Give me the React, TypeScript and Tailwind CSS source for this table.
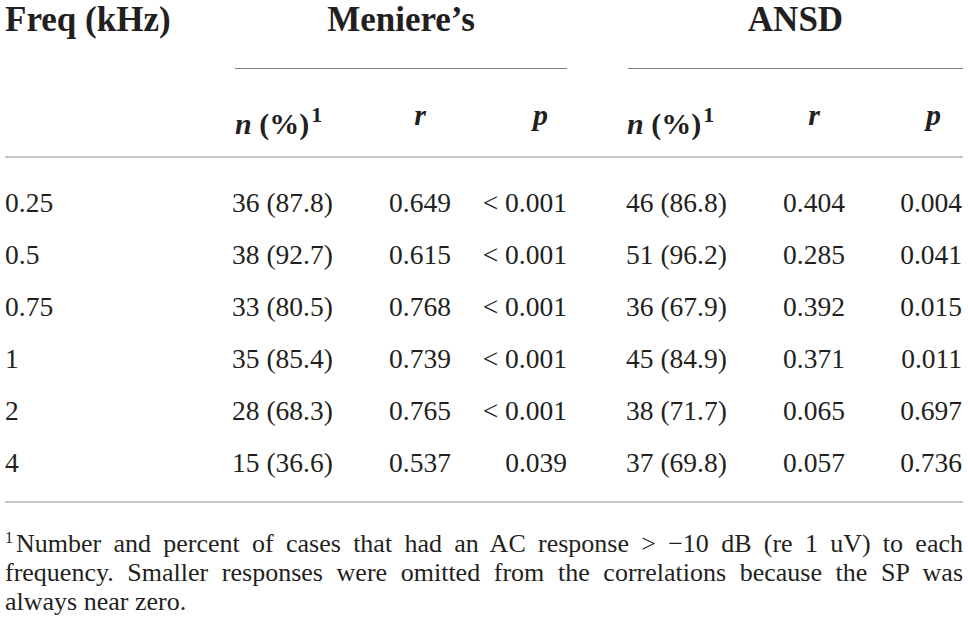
import React from "react";

const rows = [
  ["0.25", "36 (87.8)", "0.649", "< 0.001", "46 (86.8)", "0.404", "0.004"],
  ["0.5", "38 (92.7)", "0.615", "< 0.001", "51 (96.2)", "0.285", "0.041"],
  ["0.75", "33 (80.5)", "0.768", "< 0.001", "36 (67.9)", "0.392", "0.015"],
  ["1", "35 (85.4)", "0.739", "< 0.001", "45 (84.9)", "0.371", "0.011"],
  ["2", "28 (68.3)", "0.765", "< 0.001", "38 (71.7)", "0.065", "0.697"],
  ["4", "15 (36.6)", "0.537", "0.039", "37 (69.8)", "0.057", "0.736"],
];

function NPct() {
  return (
    <span className="whitespace-nowrap">
      <span className="italic">n</span> (%)
      <span className="text-[22px] align-[12px] ml-[2px]">1</span>
    </span>
  );
}

export default function App() {
  return (
    <div
      className="w-[968px] h-[633px] bg-white px-[5px] text-[#231f20] overflow-hidden"
      style={{ fontFamily: '"Liberation Serif", "Times New Roman", serif' }}
    >
      <div className="grid grid-cols-[227px_140px_96px_99px_59px_138px_100px_99px]">
        {/* header row 1 */}
        <div className="h-[69px] text-[35px] leading-[40px] font-bold whitespace-nowrap">
          Freq (kHz)
        </div>
        <div className="col-span-3 h-[69px] ml-[3px] border-b border-[#7d7d7d] text-center text-[35px] leading-[40px] font-bold">
          Meniere’s
        </div>
        <div className="h-[69px]" />
        <div className="col-span-3 h-[69px] ml-[2px] border-b border-[#7d7d7d] text-center text-[35px] leading-[40px] font-bold">
          ANSD
        </div>

        {/* header row 2 */}
        <div className="h-[87px]" />
        <div className="h-[87px] pt-[28px] pl-[3px] text-[30px] leading-[36px] font-bold">
          <NPct />
        </div>
        <div className="h-[87px] pt-[28px] text-center text-[30px] leading-[36px] font-bold italic">
          r
        </div>
        <div className="h-[87px] pt-[28px] pr-[19px] text-right text-[30px] leading-[36px] font-bold italic">
          p
        </div>
        <div className="h-[87px]" />
        <div className="h-[87px] pt-[28px] pl-[1px] text-[30px] leading-[36px] font-bold">
          <NPct />
        </div>
        <div className="h-[87px] pt-[28px] text-center text-[30px] leading-[36px] font-bold italic">
          r
        </div>
        <div className="h-[87px] pt-[28px] pr-[22px] text-right text-[30px] leading-[36px] font-bold italic">
          p
        </div>

        <div className="col-span-8 h-[2px] bg-[#c6c6c6]" />
        <div className="col-span-8 h-[19px]" />

        {rows.map((r, i) => (
          <React.Fragment key={i}>
            <div className="h-[52px] text-[27.5px] leading-[52px]">{r[0]}</div>
            <div className="h-[52px] text-[27.5px] leading-[52px] whitespace-nowrap">{r[1]}</div>
            <div className="h-[52px] text-[27.5px] leading-[52px] text-center">{r[2]}</div>
            <div className="h-[52px] text-[27.5px] leading-[52px] text-right whitespace-nowrap">{r[3]}</div>
            <div className="h-[52px]" />
            <div className="h-[52px] text-[27.5px] leading-[52px] whitespace-nowrap">{r[4]}</div>
            <div className="h-[52px] text-[27.5px] leading-[52px] text-center">{r[5]}</div>
            <div className="h-[52px] text-[27.5px] leading-[52px] text-right pr-[1px]">{r[6]}</div>
          </React.Fragment>
        ))}

        <div className="col-span-8 h-[12px]" />
        <div className="col-span-8 h-[2px] bg-[#c6c6c6]" />
      </div>

      <div className="mt-[20px] text-[26px] leading-[29px]">
        <div className="text-justify [text-align-last:justify]">
          <span className="text-[16px] align-[9px] mr-[3px]">1</span>Number and percent of cases that had an AC response &gt; −10 dB (re 1 uV) to each
        </div>
        <div className="text-justify [text-align-last:justify]">
          frequency. Smaller responses were omitted from the correlations because the SP was
        </div>
        <div>always near zero.</div>
      </div>
    </div>
  );
}
